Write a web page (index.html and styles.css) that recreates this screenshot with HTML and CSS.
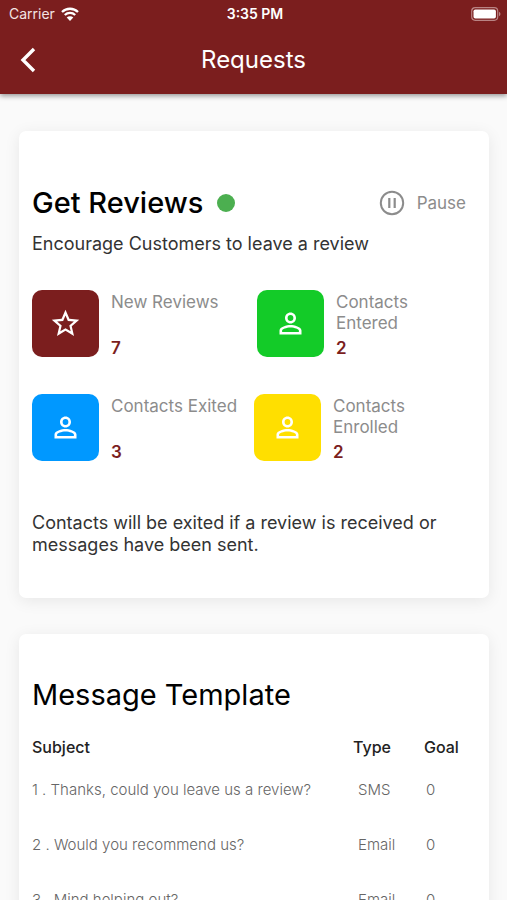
FILE: index.html
```html
<!DOCTYPE html>
<html lang="en">
<head>
<meta charset="utf-8">
<meta name="viewport" content="width=device-width, initial-scale=1">
<title>Requests</title>
<link rel="stylesheet" href="styles.css">
</head>
<body>
<svg class="sprite" aria-hidden="true">
  <symbol id="person" viewBox="0 0 24 24"><path fill="currentColor" d="M12 5.9a2.1 2.1 0 1 1 0 4.2 2.1 2.1 0 0 1 0-4.2m0 9c2.97 0 6.1 1.46 6.1 2.1v1.1H5.9V17c0-.64 3.13-2.1 6.1-2.1M12 4C9.79 4 8 5.79 8 8s1.79 4 4 4 4-1.79 4-4-1.79-4-4-4zm0 9c-2.67 0-8 1.34-8 4v3h16v-3c0-2.66-5.33-4-8-4z"/></symbol>
  <symbol id="star" viewBox="0 0 24 24"><path fill="currentColor" d="M22 9.24l-7.19-.62L12 2 9.19 8.63 2 9.24l5.46 4.73L5.82 21 12 17.27 18.18 21l-1.63-7.03L22 9.24zM12 15.4l-3.76 2.27 1-4.28-3.32-2.88 4.38-.38L12 6.1l1.71 4.04 4.38.38-3.32 2.88 1 4.28L12 15.4z"/></symbol>
</svg>
<div class="app">
  <header class="header">
    <div class="status">
      <div class="carrier">
        <span>Carrier</span>
        <svg class="wifi" viewBox="0 0 18 14" aria-hidden="true">
          <path d="M1 5a11.500 11.500 0 0 1 16 0M3.800 8a7.500 7.500 0 0 1 10.400 0" fill="none" stroke="currentColor" stroke-width="2.300"/>
          <path d="M9 14 5.700 10.600a4.700 4.700 0 0 1 6.600 0z" fill="currentColor"/>
        </svg>
      </div>
      <div class="clock">3:35 PM</div>
      <svg class="battery" viewBox="0 0 30 14" aria-hidden="true">
        <rect x=".7" y=".7" width="26" height="12.600" rx="3.500" fill="none" stroke="#b98484" stroke-width="1.200"/>
        <rect x="2.500" y="2.500" width="22.400" height="9" rx="1.800" fill="#fff"/>
        <path d="M28 4.800c2 .8 2 3.600 0 4.400z" fill="#b98484"/>
      </svg>
    </div>
    <nav class="nav">
      <button class="back" type="button" aria-label="Back">
        <svg viewBox="0 0 16 26" aria-hidden="true"><path d="M14 2 3 13l11 11" fill="none" stroke="currentColor" stroke-width="3.400"/></svg>
      </button>
      <h1 class="nav-title">Requests</h1>
    </nav>
  </header>
  <main class="content">
    <section class="card">
      <div class="card-head">
        <h2 class="title strong">Get Reviews</h2>
        <span class="dot"></span>
        <button class="pause" type="button">
          <svg viewBox="0 0 26 26" aria-hidden="true"><circle cx="13" cy="13" r="11.200" fill="none" stroke="currentColor" stroke-width="2"/><path d="M10.300 8v10M15.700 8v10" stroke="currentColor" stroke-width="2.200"/></svg>
          <span>Pause</span>
        </button>
      </div>
      <p class="text">Encourage Customers to leave a review</p>
      <div class="stats">
        <div class="stats-row spaced">
          <div class="stat">
            <div class="tile red"><svg viewBox="0 0 24 24" aria-hidden="true"><use href="#star"/></svg></div>
            <div class="stat-text"><span class="label">New Reviews</span><strong class="value">7</strong></div>
          </div>
          <div class="stat">
            <div class="tile green"><svg viewBox="0 0 24 24" aria-hidden="true"><use href="#person"/></svg></div>
            <div class="stat-text"><span class="label">Contacts<br>Entered</span><strong class="value">2</strong></div>
          </div>
        </div>
        <div class="stats-row">
          <div class="stat">
            <div class="tile blue"><svg viewBox="0 0 24 24" aria-hidden="true"><use href="#person"/></svg></div>
            <div class="stat-text"><span class="label">Contacts Exited</span><strong class="value">3</strong></div>
          </div>
          <div class="stat">
            <div class="tile yellow"><svg viewBox="0 0 24 24" aria-hidden="true"><use href="#person"/></svg></div>
            <div class="stat-text"><span class="label">Contacts<br>Enrolled</span><strong class="value">2</strong></div>
          </div>
        </div>
      </div>
      <p class="text">Contacts will be exited if a review is received or messages have been sent.</p>
    </section>
    <section class="card compact">
      <h2 class="title">Message Template</h2>
      <table class="templates">
        <thead>
          <tr><th class="subject">Subject</th><th class="type">Type</th><th class="goal">Goal</th></tr>
        </thead>
        <tbody>
          <tr><td>1 . Thanks, could you leave us a review?</td><td>SMS</td><td>0</td></tr>
          <tr><td>2 . Would you recommend us?</td><td>Email</td><td>0</td></tr>
          <tr><td>3 . Mind helping out?</td><td>Email</td><td>0</td></tr>
        </tbody>
      </table>
    </section>
  </main>
</div>
</body>
</html>
```
FILE: styles.css
```css
* { box-sizing: border-box; }

body {
  margin: 0;
  background: #fafafa;
  color: #333;
  font-family: Inter, "Liberation Sans", sans-serif;
}

h1, h2, p { margin: 0; }

button {
  padding: 0;
  border: 0;
  background: none;
  color: inherit;
  font: inherit;
  cursor: pointer;
}

svg { display: block; }

.sprite { position: absolute; width: 0; height: 0; }

.app {
  display: flex;
  flex-direction: column;
  height: 100vh;
}

.header {
  flex: none;
  position: relative;
  background: #7b1e1e;
  color: #fff;
  box-shadow: 0 2px 5px rgba(0, 0, 0, 0.4);
}

.status {
  display: grid;
  grid-template-columns: 1fr auto 1fr;
  align-items: center;
  height: 27px;
  padding: 0 6px 0 9px;
  font-size: 14px;
}

.carrier { display: flex; align-items: center; gap: 6px; color: #f3e4e4; }
.wifi { width: 18px; height: 14px; color: #fff; }
.clock { font-weight: 600; }
.battery { width: 30px; height: 14px; justify-self: end; }

.nav {
  display: grid;
  grid-template-columns: 48px 1fr 48px;
  align-items: center;
  height: 67px;
  padding-bottom: 2px;
}

.back { padding-left: 20px; }
.back svg { width: 16px; height: 26px; }

.nav-title {
  font-size: 24px;
  font-weight: 400;
  line-height: 30px;
  text-align: center;
}

.content {
  display: flex;
  flex: 1;
  flex-direction: column;
  gap: 36px;
  min-height: 0;
  padding: 37px 18px 37px 19px;
  overflow-y: auto;
  scrollbar-width: none;
}

.card {
  flex: none;
  padding: 53px 13px 42px;
  border-radius: 7px;
  background: #fff;
  box-shadow: 0 3px 16px rgba(0, 0, 0, 0.08);
}

.card.compact { padding-top: 42px; }

.card-head { display: flex; align-items: center; }

.title {
  color: #000;
  font-size: 29px;
  font-weight: 400;
  line-height: 38px;
}

.title.strong { font-weight: 500; }

.dot {
  width: 18px;
  height: 18px;
  margin-left: 14px;
  border-radius: 50%;
  background: #4caf50;
}

.pause {
  display: flex;
  align-items: center;
  gap: 12px;
  margin-left: auto;
  margin-right: 10px;
  color: #8c8c8c;
  font-size: 17px;
}

.pause svg { width: 26px; height: 26px; }

.text {
  margin-top: 11px;
  font-size: 18px;
  line-height: 22px;
}

.stats {
  display: flex;
  flex-direction: column;
  gap: 37px;
  margin: 35px 0 51px;
}

.stats-row { display: grid; grid-template-columns: 1fr 1fr; }
.stats-row.spaced { column-gap: 6px; }
.stat { display: flex; gap: 12px; }

.tile {
  display: flex;
  flex: none;
  align-items: center;
  justify-content: center;
  width: 67px;
  height: 67px;
  border-radius: 10px;
  color: #fff;
}

.tile svg { width: 33px; height: 33px; }
.red { background: #7b1e1e; }
.green { background: #13cb28; }
.blue { background: #0098ff; }
.yellow { background: #ffdf00; }

.stat-text {
  display: flex;
  flex-direction: column;
  justify-content: space-between;
  padding-top: 2px;
  font-size: 17px;
  line-height: 21px;
}

.label { color: #8c8c8c; }
.value { color: #7b1e1e; font-weight: 600; line-height: 18px; }

.templates {
  width: 100%;
  margin-top: 18px;
  border-collapse: collapse;
  table-layout: fixed;
  font-size: 15px;
  font-weight: 300;
}

.templates th {
  height: 30px;
  padding: 0;
  color: #222;
  font-size: 16px;
  font-weight: 500;
  text-align: left;
}

.templates td {
  height: 55px;
  padding: 0;
  color: #666;
}

.templates .type { width: 71px; }
.templates .goal { width: 52px; }
.templates td + td { padding-left: 5px; }
.templates td:last-child { padding-left: 2px; }
```
